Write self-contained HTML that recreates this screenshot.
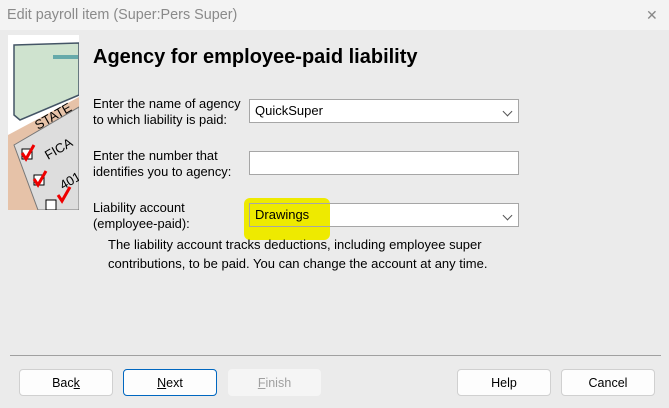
<!DOCTYPE html><html><head><style>
body{margin:0;width:669px;height:408px;overflow:hidden;background:#ebebeb;font-family:"Liberation Sans",sans-serif;position:relative}
.t{position:absolute;left:0;top:0;width:669px;height:30px;background:#f3f3f3;}
.t span{position:absolute;left:7px;top:7px;font-size:14.4px;color:#8a8a8a}
.a{position:absolute;font-size:12.9px;color:#000;line-height:16px}
.i{position:absolute;left:249px;width:268px;height:22px;background:#fff;border:1px solid #a6a6a6;font-size:13px;line-height:22px;text-indent:5px}
.dd{position:absolute;right:7px;top:8px;width:6px;height:6px;border-right:1px solid #555;border-bottom:1px solid #555;transform:rotate(45deg)}
.b{position:absolute;top:369px;height:27px;background:#fdfdfd;border:1px solid #d0d0d0;border-radius:4px;font-size:12.5px;text-align:center;line-height:27px;box-sizing:border-box}
</style></head><body>
<div class="t"><span>Edit payroll item (Super:Pers Super)</span><div style="position:absolute;left:646px;top:7px;font-size:14px;color:#888">✕</div></div>
<svg style="position:absolute;left:8px;top:35px" width="71" height="175" viewBox="0 0 71 175">
<rect width="71" height="175" fill="#fff"/>
<path d="M6 10 L71 8 L71 60 L12 85 L6 80Z" fill="#cfe3cf" stroke="#456" stroke-width="1.5"/>
<rect x="45" y="20" width="25" height="4" fill="#6aa"/>
<path d="M0 100 L71 62 L71 175 L0 175Z" fill="#e6c2a8"/>
<path d="M6 110 L71 72 L71 175 L30 175Z" fill="#ddd" stroke="#777"/>
<text x="30" y="95" font-size="13" transform="rotate(-30 30 95)" font-family="Liberation Sans">STATE</text>
<text x="40" y="125" font-size="13" transform="rotate(-30 40 125)" font-family="Liberation Sans">FICA</text>
<text x="55" y="155" font-size="13" transform="rotate(-30 55 155)" font-family="Liberation Sans">401</text>
<rect x="14" y="114" width="10" height="10" fill="#fff" stroke="#000"/><rect x="26" y="140" width="10" height="10" fill="#fff" stroke="#000"/><rect x="38" y="165" width="10" height="10" fill="#fff" stroke="#000"/>
<path d="M14 118 l4 6 l8 -14 M26 144 l4 6 l8 -14 M50 160 l4 6 l8 -14" stroke="#e00" stroke-width="3" fill="none"/>
</svg>
<div class="a" style="left:93px;top:46px;font-size:20px;font-weight:bold;line-height:22px">Agency for employee-paid liability</div>
<div class="a" style="left:93px;top:96px">Enter the name of agency<br>to which liability is paid:</div>
<div class="a" style="left:93px;top:148px">Enter the number that<br>identifies you to agency:</div>
<div class="a" style="left:93px;top:200px">Liability account<br>(employee-paid):</div>
<div style="position:absolute;left:244px;top:198px;width:86px;height:42px;background:#eeea00;border-radius:6px"></div>
<div class="i" style="top:99px">QuickSuper<div class="dd"></div></div>
<div class="i" style="top:151px"></div>
<div class="i" style="top:203px;background:linear-gradient(90deg,#eeea00 80px,#fff 80px)">Drawings<div class="dd"></div></div>
<div class="a" style="left:108px;top:235px;line-height:19px;font-size:13px">The liability account tracks deductions, including employee super<br>contributions, to be paid. You can change the account at any time.</div>
<div style="position:absolute;left:10px;top:355px;width:651px;height:1px;background:#a0a0a0"></div>
<div class="b" style="left:19px;width:94px">Bac<u>k</u></div>
<div class="b" style="left:123px;width:94px;border:1px solid #0067c0"><u>N</u>ext</div>
<div class="b" style="left:228px;width:93px;background:#f5f5f5;border-color:#f5f5f5;color:#a0a0a0"><u>F</u>inish</div>
<div class="b" style="left:457px;width:94px">Help</div>
<div class="b" style="left:561px;width:94px">Cancel</div>
</body></html>
